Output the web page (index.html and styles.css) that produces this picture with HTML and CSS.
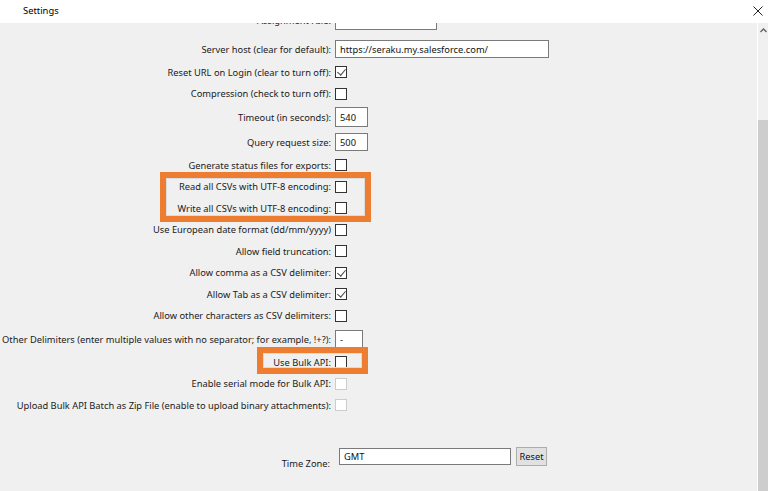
FILE: index.html
```html
<!DOCTYPE html>
<html lang="en">
  <head>
    <meta charset="UTF-8" />
    <title>Settings</title>
    <link rel="stylesheet" href="styles.css">
  </head>
  <body>
    <div class="window">
      <div class="titlebar">
        <span class="title">Settings</span>
        <svg class="close" width="10" height="10" viewBox="0 0 10 10">
          <path d="M0.5 0.5 L9.5 9.5 M9.5 0.5 L0.5 9.5" stroke="#222" stroke-width="1" fill="none" />
        </svg>
      </div>
      <div class="main">
        <div class="pane">
          <div class="form">
            <div class="row tall assign">
              <label>Assignment rule:</label>
              <span class="field w-assign"></span>
            </div>
            <div class="row tall">
              <label>Server host (clear for default):</label>
              <span class="field w-host">https://seraku.my.salesforce.com/</span>
            </div>
            <div class="row">
              <label>Reset URL on Login (clear to turn off):</label>
              <span class="check checked"></span>
            </div>
            <div class="row">
              <label>Compression (check to turn off):</label>
              <span class="check"></span>
            </div>
            <div class="row tall">
              <label>Timeout (in seconds):</label>
              <span class="field w-short big">540</span>
            </div>
            <div class="row tall">
              <label>Query request size:</label>
              <span class="field w-short">500</span>
            </div>
            <div class="row">
              <label>Generate status files for exports:</label>
              <span class="check"></span>
            </div>
            <div class="row">
              <label>Read all CSVs with UTF-8 encoding:</label>
              <span class="check"></span>
            </div>
            <div class="row">
              <label>Write all CSVs with UTF-8 encoding:</label>
              <span class="check"></span>
            </div>
            <div class="row">
              <label>Use European date format (dd/mm/yyyy)</label>
              <span class="check"></span>
            </div>
            <div class="row">
              <label>Allow field truncation:</label>
              <span class="check"></span>
            </div>
            <div class="row">
              <label>Allow comma as a CSV delimiter:</label>
              <span class="check checked"></span>
            </div>
            <div class="row">
              <label>Allow Tab as a CSV delimiter:</label>
              <span class="check checked"></span>
            </div>
            <div class="row">
              <label>Allow other characters as CSV delimiters:</label>
              <span class="check"></span>
            </div>
            <div class="row tall">
              <label>Other Delimiters (enter multiple values with no separator; for example, !+?):</label>
              <span class="field w-delim">-</span>
            </div>
            <div class="row">
              <label>Use Bulk API:</label>
              <span class="check"></span>
            </div>
            <div class="row">
              <label>Enable serial mode for Bulk API:</label>
              <span class="check disabled"></span>
            </div>
            <div class="row">
              <label>Upload Bulk API Batch as Zip File (enable to upload binary attachments):</label>
              <span class="check disabled"></span>
            </div>
            <div class="row tz">
              <label>Time Zone:</label>
              <span class="field w-tz">GMT</span>
              <button type="button" class="btn">Reset</button>
            </div>
          </div>
          <div class="highlight hl-utf8"></div>
          <div class="highlight hl-bulk"></div>
        </div>
        <div class="scrollbar">
          <svg class="arrow" width="7" height="5" viewBox="0 0 7 5">
            <path d="M0.5 4 L3.5 1 L6.5 4" stroke="#606060" stroke-width="1.3" fill="none" />
          </svg>
          <div class="thumb"></div>
        </div>
      </div>
    </div>
  </body>
</html>
```

FILE: styles.css
```css
* {
  box-sizing: border-box;
}
html,
body {
  margin: 0;
  padding: 0;
  height: 100%;
}
body {
  font-family: "Noto Sans", "Open Sans", Arial, sans-serif;
  font-size: 9.3px;
  color: #1a1a1a;
  background: #fff;
}
.window {
  display: flex;
  flex-direction: column;
  height: 100vh;
}
.titlebar {
  height: 23px;
  flex: none;
  display: flex;
  align-items: center;
  padding: 0 5px 2px 23px;
  background: #fff;
  position: relative;
  z-index: 2;
}
.title {
  flex: 1;
  color: #000;
  font-size: 9.4px;
}
.main {
  flex: 1;
  display: flex;
  min-height: 0;
}
.pane {
  flex: 1;
  position: relative;
  overflow: hidden;
  background: #f0f0f0;
}
.form {
  display: flex;
  flex-direction: column;
  margin-top: -15.5px;
}
.row {
  display: flex;
  align-items: center;
  height: 21.5px;
}
.row.tall {
  height: 25px;
}
.row.assign {
  margin-bottom: 4px;
}
.row label {
  width: 331px;
  flex: none;
  text-align: right;
  white-space: nowrap;
  margin-right: 4px;
}
.field {
  height: 18px;
  background: #fff;
  border: 1px solid #7a7a7a;
  padding: 0 4px;
  display: flex;
  align-items: center;
  white-space: nowrap;
  color: #111;
}
.field.big {
  height: 20px;
}
.w-assign {
  width: 102px;
  height: 19px;
}
.w-host {
  width: 214px;
}
.w-short {
  width: 33px;
}
.w-delim {
  width: 28px;
}
.check {
  width: 12px;
  height: 12px;
  background: #fff;
  border: 1px solid #333;
  position: relative;
}
.check.disabled {
  border-color: #cccccc;
}
.check.checked::after {
  content: "";
  position: absolute;
  left: 3px;
  top: 0;
  width: 4px;
  height: 7px;
  border-right: 1px solid #444;
  border-bottom: 1px solid #444;
  transform: rotate(40deg);
  transform-origin: center;
}
.row.tz {
  margin-top: 30px;
  height: 20px;
}
.row.tz label {
  align-self: flex-end;
  margin-bottom: -4px;
  width: 330px;
  margin-right: 9px;
}
.w-tz {
  width: 172px;
  height: 17px;
  align-items: flex-start;
  padding-top: 1px;
}
.btn {
  margin-left: 5px;
  height: 19px;
  width: 31px;
  padding: 0;
  font: inherit;
  color: #111;
  background: #e1e1e1;
  border: 1px solid #adadad;
}
.highlight {
  position: absolute;
  border: 6px solid #ed7d31;
  box-shadow: inset 0 0 0 1px #dcdcdc;
}
.hl-utf8 {
  left: 160px;
  top: 149px;
  width: 211px;
  height: 50px;
}
.hl-bulk {
  left: 257px;
  top: 324px;
  width: 111px;
  height: 27px;
}
.scrollbar {
  width: 11px;
  flex: none;
  border-left: 1px solid #fff;
  background: #f0f0f0;
  display: flex;
  flex-direction: column;
  align-items: center;
}
.arrow {
  margin-top: 5px;
}
.thumb {
  margin-top: 87px;
  align-self: stretch;
  flex: 1;
  background: #cdcdcd;
}
```
